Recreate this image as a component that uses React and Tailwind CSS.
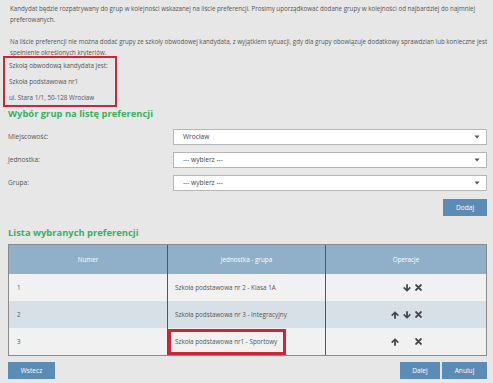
import React from 'react';

const UpIcon = () => (
    <svg width="8" height="8" viewBox="0 0 10 10" className="fill-[#444]">
        <path d="M5 0.3 L9.8 5.1 L8.4 6.5 L6.1 4.2 V9.8 H3.9 V4.2 L1.6 6.5 L0.2 5.1 Z" />
    </svg>
);

const DownIcon = () => (
    <svg width="8" height="8" viewBox="0 0 10 10" className="fill-[#444]">
        <path d="M5 9.7 L9.8 4.9 L8.4 3.5 L6.1 5.8 V0.2 H3.9 V5.8 L1.6 3.5 L0.2 4.9 Z" />
    </svg>
);

const CloseIcon = () => (
    <svg width="7" height="7" viewBox="0 0 10 10" className="stroke-[#444]" strokeWidth="2.8" strokeLinecap="round">
        <path d="M1.6 1.6 L8.4 8.4 M8.4 1.6 L1.6 8.4" />
    </svg>
);

const Caret = () => (
    <svg width="6" height="4" viewBox="0 0 6 4" className="fill-[#555]">
        <path d="M0.5 0.5 H5.5 L3 3.5 Z" />
    </svg>
);

const SelectRow = ({ label, value }) => (
    <div className="flex items-center h-[16px]">
        <span className="w-[165px] text-[6.6px] text-[#555]">{label}</span>
        <div className="flex-1 h-[16px] bg-white border border-[#b5b5b5] flex items-center justify-between pl-[9px] pr-[6px]">
            <span className="text-[6.6px] text-[#444]">{value}</span>
            <Caret />
        </div>
    </div>
);

const BlueButton = ({ children, className = '' }) => (
    <button className={`h-[17px] bg-[#5b8cb6] text-white text-[6.6px] flex items-center justify-center ${className}`}>
        {children}
    </button>
);

const rows = [
    { num: '1', name: 'Szkoła podstawowa nr 2 - Klasa 1A', up: false, down: true, bg: 'bg-[#f1f1f1]' },
    { num: '2', name: 'Szkoła podstawowa nr 3 - Integracyjny', up: true, down: true, bg: 'bg-[#d8e0e7]' },
    { num: '3', name: 'Szkoła podstawowa nr1 - Sportowy', up: true, down: false, bg: 'bg-[#f1f1f1]', marked: true },
];

export default function App() {
    return (
        <div className="w-[493px] h-[383px] overflow-hidden bg-[#e7e7e7] pl-[8px] pr-[6px] font-['Open_Sans',sans-serif] text-[#555]">
            <div className="pt-[3px] pl-[2px] h-[25px] text-[6.2px] leading-[11px] whitespace-nowrap">
                <div>Kandydat będzie rozpatrywany do grup w kolejności wskazanej na liście preferencji. Prosimy uporządkować dodane grupy w kolejności od najbardziej do najmniej</div>
                <div>preferowanych.</div>
            </div>
            <div className="mt-[11px] pl-[2px] h-[22px] text-[6.2px] leading-[11px] whitespace-nowrap">
                <div>Na liście preferencji nie można dodać grupy ze szkoły obwodowej kandydata, z wyjątkiem sytuacji, gdy dla grupy obowiązuje dodatkowy sprawdzian lub konieczne jest</div>
                <div>spełnienie określonych kryteriów.</div>
            </div>

            <div className="-mt-[2px] -ml-[5px] w-[114px] h-[51px] border-2 border-[#c8283a] pl-[4px] text-[6.3px] leading-[16px] whitespace-nowrap">
                <div>Szkołą obwodową kandydata jest:</div>
                <div>Szkoła podstawowa nr1</div>
                <div>ul. Stara 1/1, 50-128 Wrocław</div>
            </div>

            <h2 className="text-[9.4px] leading-[13px] font-bold text-[#3dae5f]">Wybór grup na listę preferencji</h2>

            <div className="mt-[9px] flex flex-col gap-[7px]">
                <SelectRow label="Miejscowość:" value="Wrocław" />
                <SelectRow label="Jednostka:" value="--- wybierz ---" />
                <SelectRow label="Grupa:" value="--- wybierz ---" />
            </div>

            <div className="mt-[8px] flex justify-end">
                <BlueButton className="w-[44px] h-[16px]">Dodaj</BlueButton>
            </div>

            <h2 className="mt-[10px] text-[9.4px] leading-[13px] font-bold text-[#3dae5f]">Lista wybranych preferencji</h2>

            <div className="mt-[5px] w-[479px] border border-[#8a8a8a] text-[6.3px]">
                <div className="grid grid-cols-[159px_158px_1fr] h-[29px] bg-[#8fb0c8] text-white">
                    <div className="flex items-center justify-center border-r border-[#555]">Numer</div>
                    <div className="flex items-center justify-center border-r border-[#555]">Jednostka - grupa</div>
                    <div className="flex items-center justify-center">Operacje</div>
                </div>
                {rows.map((r) => (
                    <div key={r.num} className={`grid grid-cols-[159px_158px_1fr] h-[27px] ${r.bg}`}>
                        <div className="flex items-center pl-[8px] border-r border-[#555]">{r.num}</div>
                        <div className="flex items-center border-r border-[#555]">
                            {r.marked ? (
                                <div className="w-[118px] h-[26px] border-[3px] border-[#c8283a] flex items-center pl-[4px] whitespace-nowrap">{r.name}</div>
                            ) : (
                                <div className="pl-[7px] whitespace-nowrap">{r.name}</div>
                            )}
                        </div>
                        <div className="flex items-center justify-center gap-[4px] pl-[1px]">
                            <span className="w-[8px] flex justify-center">{r.up && <UpIcon />}</span>
                            <span className="w-[8px] flex justify-center">{r.down && <DownIcon />}</span>
                            <span className="w-[8px] flex justify-center"><CloseIcon /></span>
                        </div>
                    </div>
                ))}
            </div>

            <div className="mt-[6px] flex justify-between">
                <BlueButton className="w-[47px]">Wstecz</BlueButton>
                <div className="flex gap-[2px]">
                    <BlueButton className="w-[40px]">Dalej</BlueButton>
                    <BlueButton className="w-[45px]">Anuluj</BlueButton>
                </div>
            </div>
        </div>
    );
}
